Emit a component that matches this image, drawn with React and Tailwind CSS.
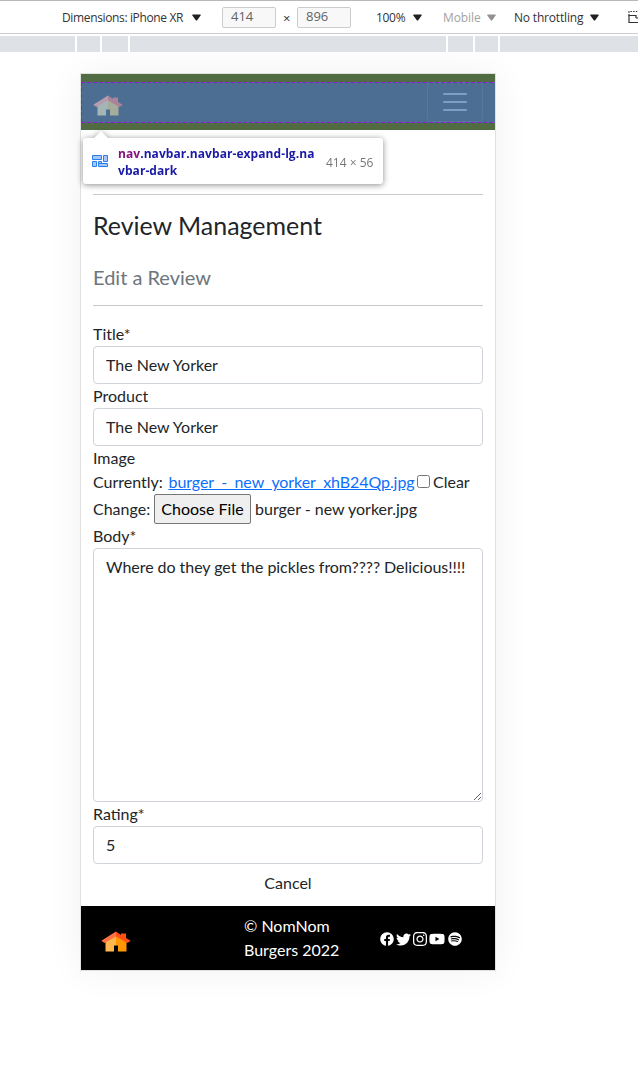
import React from "react";
import { FaFacebook, FaTwitter, FaInstagram, FaYoutube, FaSpotify } from "react-icons/fa";

const Caret = ({ className }) => (
  <svg viewBox="0 0 9 7" className={`h-[7px] w-[9px] shrink-0 ${className}`} fill="currentColor">
    <path d="M0.8 0.5H8.2Q9 0.7 8.6 1.6L5.4 5.9Q4.5 6.9 3.6 5.9L0.4 1.6Q0 0.7 0.8 0.5Z" />
  </svg>
);

const House = () => (
  <svg viewBox="0 0 30 22" className="block h-[22px] w-[30px]">
    <path d="M4.5 10 15 3V20.5H4.5Z" fill="#ffb74d" />
    <path d="M15 3 25.500 10V20.500H15Z" fill="#ff9800" />
    <path d="M13 14.500H17V21H13Z" fill="#000" />
    <path d="M15 .5V5.500L3.500 12 .3 9.700Z" fill="#ff7043" />
    <path d="M15 .5 20 4V2.500H25V7L29.700 9.700 26.500 12 15 5.500Z" fill="#ff4f17" />
  </svg>
);

const Toolbar = () => (
  <div className="flex h-[34px] items-center border-t border-b border-t-[#b8b8b8] border-b-[#cacdd1] bg-white font-['Open_Sans',sans-serif] text-[12px] whitespace-nowrap text-[#333] *:shrink-0">
    <span className="ml-[62px] w-[121px] pt-[2px] tracking-[-0.36px]">Dimensions: iPhone XR</span>
    <Caret className="ml-[9px] text-[#202124]" />
    <span className="ml-[21px] flex h-[21px] w-[54px] items-center rounded-[2px] border border-[#ccc] bg-[#f8f8f8] pl-[8px] text-[13px] text-[#5f6368]">414</span>
    <span className="ml-[7px] w-[7px] pt-[3px] text-[13px]">×</span>
    <span className="ml-[7px] flex h-[21px] w-[54px] items-center rounded-[2px] border border-[#ccc] bg-[#f8f8f8] pl-[8px] text-[13px] text-[#5f6368]">896</span>
    <span className="ml-[25px] w-[29px] pt-[2px] tracking-[-0.3px]">100%</span>
    <Caret className="ml-[8px] text-[#202124]" />
    <span className="ml-[21px] w-[37px] pt-[2px] tracking-[-0.1px] text-[#a3a3a3]">Mobile</span>
    <Caret className="ml-[7px] text-[#919191]" />
    <span className="ml-[18px] w-[69px] pt-[2px] tracking-[-0.18px]">No throttling</span>
    <Caret className="ml-[7px] text-[#202124]" />
    <svg viewBox="0 0 14 14" className="ml-[29px] h-[14px] w-[14px] shrink-0" fill="none" stroke="#333" strokeWidth="1.2">
      <path d="M1 5.500V1.500H13V5.500" strokeDasharray="1.500 1.200" />
      <path d="M8 8V5.500H1V12.500H13V8H8" />
    </svg>
  </div>
);

const Ruler = () => (
  <div className="mt-[2px] flex h-[16px] gap-[2px]">
    <div className="w-[75px] bg-[#dee1e6]" />
    <div className="w-[23px] bg-[#dee1e6]" />
    <div className="w-[26px] bg-[#dee1e6]" />
    <div className="w-[316px] bg-[#dee1e6]" />
    <div className="w-[25px] bg-[#dee1e6]" />
    <div className="w-[23px] bg-[#dee1e6]" />
    <div className="flex-1 bg-[#dee1e6]" />
  </div>
);

const InspectorTooltip = () => (
  <div className="absolute top-[64px] left-[2px] z-10 flex h-[46px] w-[300px] items-center rounded-[3px] bg-white font-['Open_Sans',sans-serif] drop-shadow-[0_1px_3px_rgba(0,0,0,0.45)]">
    <svg viewBox="0 0 14 7" className="absolute -top-[7px] left-[11px] h-[7px] w-[14px]">
      <path d="M0 7 7 0 14 7Z" fill="#fff" />
    </svg>
    <svg viewBox="0 0 16 12" className="ml-[9px] h-[12px] w-[16px] shrink-0" fill="#a4c8f8" stroke="#2b7de9" strokeWidth="1">
      <path d="M.5.5H9.500V4.500H.5ZM11.500.5H15.500V6.500H11.500ZM.5 6.500H4.500V11.500H.5ZM6.500 8.500H15.500V11.500H6.500ZM6.500 6.500H9.500V8.500H6.500Z" />
    </svg>
    <div className="ml-[10px] w-[200px] pt-[2px] text-[12px] leading-[17px] font-bold tracking-[0.07px] whitespace-nowrap text-[#1a1aa6]">
      <span className="text-[#881280]">nav</span>.navbar.navbar-expand-lg.na
      <br />
      vbar-dark
    </div>
    <span className="ml-[8px] pt-[4px] text-[12px] whitespace-nowrap text-[#777]">414 × 56</span>
  </div>
);

const Navbar = () => (
  <nav className="h-[56px] bg-[#516c42] py-[8px]">
    <div className="relative flex h-[41px] items-center justify-between bg-[#4b6e92] pr-[12px] pl-[12px]">
      <div className="pt-[6px]">
        <svg viewBox="0 0 30 22" className="block h-[22px] w-[30px]">
          <path d="M4.500 10 15 3V14.500H13V20.500H4.500Z" fill="#a3b5b5" />
          <path d="M15 3 25.500 10V20.500H17V14.500H15Z" fill="#a5ac9a" />
          <path d="M15 .5V5.500L3.500 12 .3 9.700Z" fill="#b59db0" />
          <path d="M15 .5 20 4V2.500H25V7L29.700 9.700 26.500 12 15 5.500Z" fill="#ab8299" />
        </svg>
      </div>
      <button aria-label="Menu" className="-mt-px flex h-[40px] w-[56px] items-center justify-center rounded-[4px] border border-[#53799d]">
        <span className="flex flex-col gap-[6px]">
          <span className="h-[2px] w-[24px] rounded-[1px] bg-[#7ba0c6]" />
          <span className="h-[2px] w-[24px] rounded-[1px] bg-[#7ba0c6]" />
          <span className="h-[2px] w-[24px] rounded-[1px] bg-[#7ba0c6]" />
        </span>
      </button>
      <svg className="pointer-events-none absolute inset-0 h-full w-full" fill="none" stroke="#8a1fd0">
        <path d="M0 .5H414M0 40.500H414M.5 0V41" strokeDasharray="4 2" />
      </svg>
    </div>
  </nav>
);

const field =
  "block w-full rounded-[4px] border border-[#ced4da] bg-white px-[12px] text-[16px] leading-[24px] text-[#212529] outline-none";

const ReviewForm = () => (
  <form className="leading-[24px]">
    <label className="block">Title*</label>
    <input className={`${field} h-[38px] pb-[2px]`} defaultValue="The New Yorker" />
    <label className="block">Product</label>
    <input className={`${field} h-[38px] pb-[2px]`} defaultValue="The New Yorker" />
    <label className="block">Image</label>
    <div className="flex h-[24px] items-center whitespace-nowrap">
      <span className="w-[75.5px]">Currently:</span>
      <a href="#" className="w-[245.5px] tracking-[-0.07px] text-[#0d6efd] underline">burger_-_new_yorker_xhB24Qp.jpg</a>
      <input type="checkbox" className="mr-[3px] ml-[3px] h-[13px] w-[13px] -mt-[2px]" />
      <span>Clear</span>
    </div>
    <div className="flex h-[30px] items-center whitespace-nowrap">
      <span className="w-[61px]">Change:</span>
      <button type="button" className="h-[30px] w-[97px] rounded-[2px] border border-[#767676] bg-[#efefef] text-black">Choose File</button>
      <span className="ml-[4px]">burger - new yorker.jpg</span>
    </div>
    <label className="block">Body*</label>
    <textarea className={`${field} h-[254px] resize-y py-[6px] tracking-[-0.05px]`} defaultValue="Where do they get the pickles from???? Delicious!!!!" />
    <label className="block">Rating*</label>
    <input className={`${field} h-[38px] pb-[2px]`} defaultValue="5" />
    <div className="flex h-[42px] items-start justify-center pt-[7px]">Cancel</div>
  </form>
);

const Footer = () => (
  <footer className="flex h-[64px] items-center bg-black text-[16px] leading-[24px] text-white">
    <div className="ml-[20px] w-[143px] pt-[7px]">
      <House />
    </div>
    <p className="w-[136px]">
      © NomNom
      <br />
      Burgers 2022
    </p>
    <div className="flex items-center gap-[3px] pt-[2px]">
      <FaFacebook className="h-[14px] w-[14px]" />
      <FaTwitter className="h-[15px] w-[15px] -ml-px" />
      <FaInstagram className="h-[16px] w-[14px] -ml-px" />
      <FaYoutube className="h-[16px] w-[16px] -ml-px" />
      <FaSpotify className="h-[14px] w-[14px]" />
    </div>
  </footer>
);

export default function App() {
  return (
    <div className="h-[1090px] w-[638px] overflow-hidden bg-white">
      <Toolbar />
      <Ruler />
      <div className="h-[1038px] overflow-hidden pt-[21px] pl-[80px]">
        <main className="relative h-[898px] w-[416px] border border-[#e0e0e0] bg-white font-[Lato,sans-serif] text-[16px] text-[#212529] shadow-[0_0_35px_rgba(0,0,0,0.06)]">
          <Navbar />
          <InspectorTooltip />
          <div className="px-[12px] pt-[64px]">
            <hr className="border-[#c8c9ca]" />
            <h2 className="mt-[15px] text-[24.95px] leading-[30px]">Review Management</h2>
            <h5 className="mt-[25px] text-[20px] leading-[24px] text-[#6c757d]">Edit a Review</h5>
            <hr className="mt-[16px] mb-[16px] border-[#c8c9ca]" />
            <ReviewForm />
          </div>
          <Footer />
        </main>
      </div>
    </div>
  );
}
